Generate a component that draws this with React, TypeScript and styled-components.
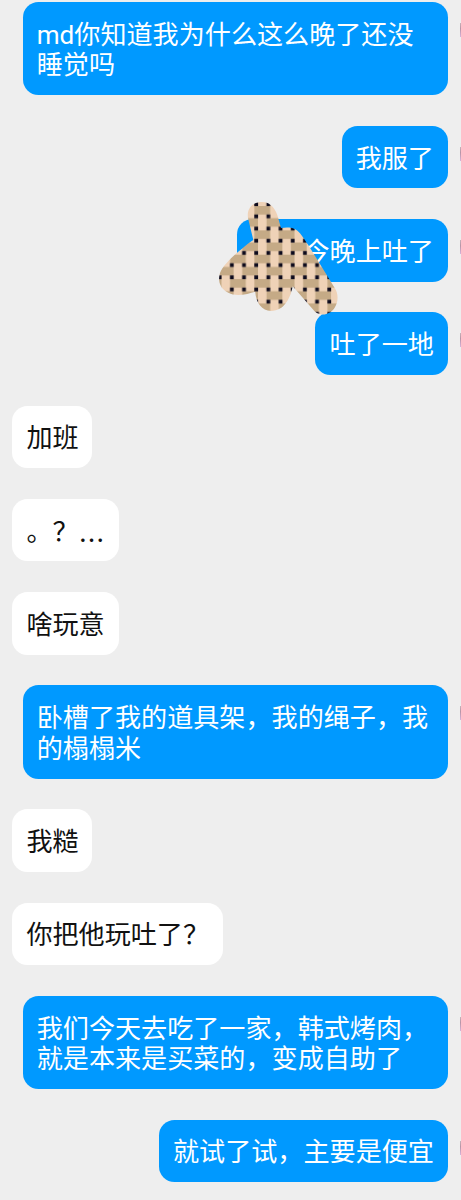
import React from 'react';
import styled, { createGlobalStyle, css } from 'styled-components';

const GlobalStyle = createGlobalStyle`
  * { box-sizing: border-box; }
  html, body { margin: 0; background: #eeeeee; }
`;

const Chat = styled.main`
  display: flex;
  flex-direction: column;
  gap: 30.78px;
  width: 461px;
  height: 1200px;
  padding: 2.1px 0 0 12.3px;
  overflow: hidden;
  background: #eeeeee;
  font-family: Roboto, 'Noto Sans CJK SC', sans-serif;
  font-size: 26.1px;
  line-height: 30.6px;
`;

const Row = styled.div<{ $mine?: boolean }>`
  position: relative;
  display: flex;
  flex-shrink: 0;
  justify-content: ${(p) => (p.$mine ? 'flex-end' : 'flex-start')};
`;

const Bubble = styled.div<{ $mine?: boolean; $minWidth?: number }>`
  max-width: 425.2px;
  min-width: ${(p) => (p.$minWidth ? `${p.$minWidth}px` : '0')};
  padding: 17.8px 13.9px 14.1px 14.1px;
  border-radius: 15.5px;
  ${(p) =>
    p.$mine
      ? css`
          color: #ffffff;
          background: #0099ff;
          text-align: ${p.$minWidth ? 'right' : 'left'};
        `
      : css`
          color: #111111;
          background: #ffffff;
        `}
`;

const AvatarEdge = styled.span`
  flex: none;
  width: 1px;
  height: 14px;
  margin: 21px 0 0 12.2px;
  background: linear-gradient(#c5b3ba, #b795a6 40%, #d5b3da);
`;

const Ellipsis = styled.span`
  display: inline-block;
  height: 30.6px;
  vertical-align: top;
  transform: translateY(7px);
  font-family: 'Noto Sans CJK SC', sans-serif;
`;

const Sticker = styled.svg`
  position: absolute;
  z-index: 1;
  left: 202.7px;
  top: -19.2px;
  width: 126px;
  height: 120px;
`;

const tan = '#c5aa86';
const cream = '#efd2b7';
const hole = '#0d0a1c';

function WovenSticker() {
  return (
    <Sticker viewBox="215 200 126 120" aria-hidden="true">
      <defs>
        <pattern
          id="weave"
          x="250.2"
          y="198.2"
          width="24.36"
          height="24.36"
          patternUnits="userSpaceOnUse"
        >
          <rect width="24.36" height="24.36" fill={cream} />
          <g fill={tan}>
            <rect x="4.2" y="7.8" width="15.78" height="8.58" />
            <rect x="16.38" y="19.98" width="7.98" height="4.38" />
            <rect x="16.38" y="0" width="7.98" height="4.2" />
            <rect x="0" y="19.98" width="7.8" height="4.38" />
            <rect x="0" y="0" width="7.8" height="4.2" />
          </g>
          <g fill={hole}>
            <rect x="4.1" y="4.1" width="3.8" height="3.8" />
            <rect x="16.28" y="4.1" width="3.8" height="3.8" />
            <rect x="4.1" y="16.28" width="3.8" height="3.8" />
            <rect x="16.28" y="16.28" width="3.8" height="3.8" />
          </g>
        </pattern>
      </defs>
      <path
        fill="url(#weave)"
        d="M253.3 240 L248 218 C246.5 208 253 202 262 202 C269 202 274 206 277.3 215 L281 228 C290 226.5 296 228 300 233.3 C303 237 306 242 308.3 245 L335 288.5 C338.5 294 338.5 302 334.5 308 C330 315 321 316.5 315 311.7 L292.7 286.3 C290.5 297 285 311 271 311 C262 310.5 256 303 255.2 291.7 C248 294 236 297 228.3 292.7 C220 288.5 217.5 281 220 273 C223 265 234 255 241.7 249 C246 245 250 242 253.3 240Z"
      />
    </Sticker>
  );
}

type Message = {
  text: React.ReactNode;
  mine?: boolean;
  minWidth?: number;
  sticker?: boolean;
};

const messages: Message[] = [
  { mine: true, text: 'md你知道我为什么这么晚了还没睡觉吗' },
  { mine: true, text: '我服了' },
  { mine: true, text: '今晚上吐了', minWidth: 211, sticker: true },
  { mine: true, text: '吐了一地' },
  { text: '加班' },
  {
    text: (
      <>
        。？<Ellipsis>…</Ellipsis>
      </>
    ),
  },
  { text: '啥玩意' },
  { mine: true, text: '卧槽了我的道具架，我的绳子，我的榻榻米' },
  { text: '我糙' },
  { text: '你把他玩吐了？' },
  { mine: true, text: '我们今天去吃了一家，韩式烤肉，就是本来是买菜的，变成自助了' },
  { mine: true, text: '就试了试，主要是便宜' },
];

export default function App() {
  return (
    <>
      <GlobalStyle />
      <Chat lang="zh-CN">
        {messages.map((m, i) => (
          <Row key={i} $mine={m.mine}>
            <Bubble $mine={m.mine} $minWidth={m.minWidth}>
              {m.text}
            </Bubble>
            {m.mine && <AvatarEdge />}
            {m.sticker && <WovenSticker />}
          </Row>
        ))}
      </Chat>
    </>
  );
}
